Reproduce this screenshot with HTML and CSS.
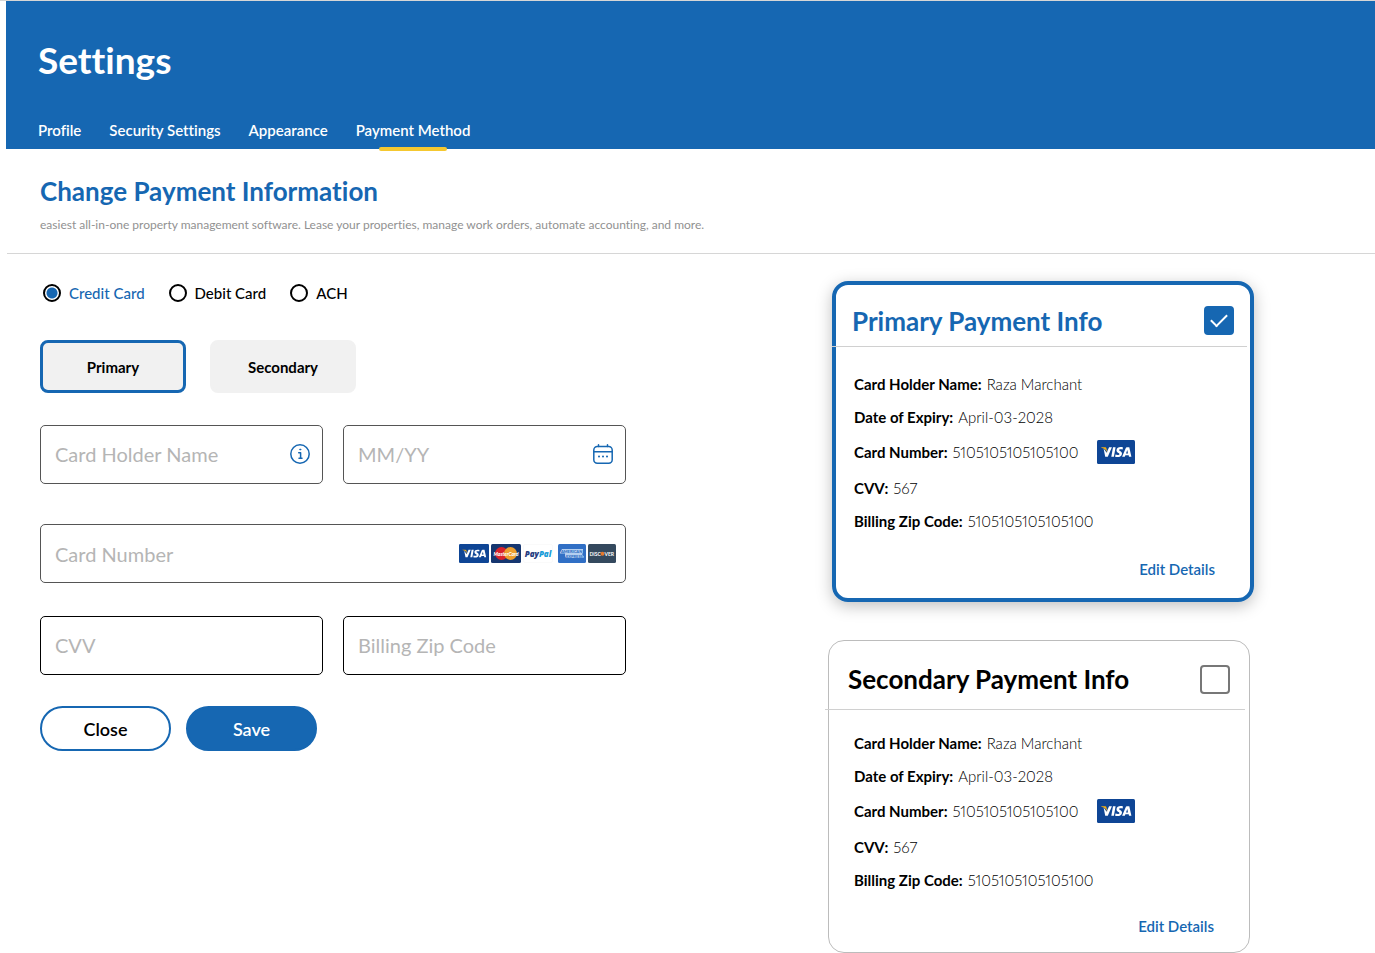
FILE: index.html
```html
<!DOCTYPE html>
<html lang="en">
<head>
<meta charset="utf-8">
<meta name="viewport" content="width=device-width, initial-scale=1">
<title>Settings - Payment Method</title>
<link rel="stylesheet" href="styles.css">
</head>
<body>
<svg class="defs" aria-hidden="true">
  <symbol id="visa" viewBox="0 0 38 24">
    <rect width="38" height="24" rx="1.5" fill="#0e4595"/>
    <path fill="#fff" d="M6.600 8.500 9.600 12.800 12.100 7.200H14.900L10.800 16.800H8.200ZM16 7.200h2.600l-1.700 9.600h-2.600ZM26 7.500l-.4 2.100c-1.500-.7-3.500-.6-3.600.3-.1.9 3.200 1.300 3 3.900-.3 3.200-3.900 3.900-6.900 2.900l.4-2.200c1.800.8 4 .6 4-.5 0-1.100-3.100-1.300-3-3.800.1-3 3.600-3.600 6.500-2.700ZM29.800 7.200h2.500l2.100 9.600H32l-.3-1.500h-3.300l-.6 1.500h-2.700l3.700-8.800c.2-.5.500-.8 1-.8Zm.5 2.700-1.300 3.500h2Z"/>
    <path fill="#f2ae14" d="M4.300 7.200H8c.8 0 1.200.3 1.400 1l1 4.600C9.200 10 7.800 8.300 4.300 7.700Z"/>
  </symbol>
</svg>

<header class="banner">
  <h1 class="banner-title">Settings</h1>
  <nav class="tabs" aria-label="Settings sections">
    <a class="tab" href="#profile">Profile</a>
    <a class="tab" href="#security">Security Settings</a>
    <a class="tab" href="#appearance">Appearance</a>
    <a class="tab tab-active" href="#payment" aria-current="page">Payment Method</a>
  </nav>
</header>

<section class="intro">
  <h2 class="intro-title">Change Payment Information</h2>
  <p class="intro-text">easiest all-in-one property management software. Lease your properties, manage work orders, automate accounting, and more.</p>
</section>

<main class="content">
  <form class="form">
    <div class="methods">
      <label class="method"><input type="radio" name="method" checked><span>Credit Card</span></label>
      <label class="method"><input type="radio" name="method"><span>Debit Card</span></label>
      <label class="method"><input type="radio" name="method"><span>ACH</span></label>
    </div>

    <div class="slots">
      <button type="button" class="slot slot-active">Primary</button>
      <button type="button" class="slot">Secondary</button>
    </div>

    <div class="fields">
      <div class="field">
        <input type="text" aria-label="Card Holder Name" placeholder="Card Holder Name">
        <svg class="field-icon" viewBox="0 0 20 20" fill="none" stroke="#1667b2" stroke-width="1.5" stroke-linecap="round" stroke-linejoin="round" aria-hidden="true"><circle cx="10" cy="10" r="9.2"/><path d="M8.700 8.700h1.900v5.500M9 14.300h3"/><circle cx="10.200" cy="5.500" r=".6" fill="#1667b2" stroke-width=".8"/></svg>
      </div>
      <div class="field">
        <input type="text" aria-label="Expiry date" placeholder="MM/YY">
        <svg class="field-icon" viewBox="0 0 20 20" fill="none" stroke="#1667b2" stroke-width="1.5" stroke-linecap="round" aria-hidden="true"><rect x=".8" y="2.500" width="18.400" height="16.700" rx="3.500"/><path d="M5.500.8v1.700M14.500.8v1.700M1 7.700h18"/><path stroke-width="2" d="M6 12.600h.01M10 12.600h.01M14 12.600h.01"/></svg>
      </div>
    </div>

    <div class="field field-number">
      <input type="text" aria-label="Card Number" placeholder="Card Number">
      <div class="brands" aria-hidden="true">
        <svg class="brand" viewBox="0 0 38 24" preserveAspectRatio="none"><use href="#visa"/></svg>
        <svg class="brand" viewBox="0 0 30 19"><rect width="30" height="19" rx="1.500" fill="#16366f"/><circle cx="10.500" cy="9.500" r="6.500" fill="#d9222a"/><circle cx="19.500" cy="9.500" r="6.500" fill="#ee9f2d"/><text class="mc-text" x="15" y="11.500" text-anchor="middle">MasterCard</text></svg>
        <svg class="brand" viewBox="0 0 30 19"><rect x=".5" y=".5" width="29" height="18" rx="1.500" fill="#fff" stroke="#fafafa"/><text class="paypal-text" x="15" y="12.500" text-anchor="middle"><tspan fill="#253b80">Pay</tspan><tspan fill="#179bd7">Pal</tspan></text></svg>
        <svg class="brand brand-narrow brand-amex" viewBox="0 0 28 19"><rect width="28" height="19" rx="1.500" fill="#306fc5"/><path d="M2 8.500 4 5h21v4l-1 1 2 3-1 1H8l-1-2V9.500H2Z" fill="#b4cff0"/><text class="amex-text" x="3" y="9">AMERICAN</text><text class="amex-text" x="8" y="13.500">EXPRESS</text></svg>
        <svg class="brand brand-narrow" viewBox="0 0 28 19"><rect width="28" height="19" rx="1.500" fill="#34495e"/><text class="discover-text" x="1.500" y="11.500">DISC</text><circle cx="14.500" cy="9.700" r="2" fill="#e7792b"/><text class="discover-text" x="16.500" y="11.500">VER</text></svg>
      </div>
    </div>

    <div class="fields fields-last">
      <div class="field field-dark"><input type="text" aria-label="CVV" placeholder="CVV"></div>
      <div class="field field-dark"><input type="text" aria-label="Billing Zip Code" placeholder="Billing Zip Code"></div>
    </div>

    <div class="actions">
      <button type="button" class="pill">Close</button>
      <button type="submit" class="pill pill-fill">Save</button>
    </div>
  </form>

  <aside class="cards">
    <article class="card card-primary">
      <label class="card-head"><span class="card-title">Primary Payment Info</span><input class="card-check" type="checkbox" checked></label>
      <hr class="card-rule">
      <dl class="details">
        <div class="row"><dt>Card Holder Name:</dt><dd>Raza Marchant</dd></div>
        <div class="row"><dt>Date of Expiry:</dt><dd>April-03-2028</dd></div>
        <div class="row row-number"><dt>Card Number:</dt><dd>5105105105105100</dd><dd class="row-brand"><svg viewBox="0 0 38 24" role="img" aria-label="Visa"><use href="#visa"/></svg></dd></div>
        <div class="row"><dt>CVV:</dt><dd>567</dd></div>
        <div class="row"><dt>Billing Zip Code:</dt><dd>5105105105105100</dd></div>
      </dl>
      <a class="edit" href="#edit-primary">Edit Details</a>
    </article>

    <article class="card card-secondary">
      <label class="card-head"><span class="card-title">Secondary Payment Info</span><input class="card-check" type="checkbox"></label>
      <hr class="card-rule">
      <dl class="details">
        <div class="row"><dt>Card Holder Name:</dt><dd>Raza Marchant</dd></div>
        <div class="row"><dt>Date of Expiry:</dt><dd>April-03-2028</dd></div>
        <div class="row row-number"><dt>Card Number:</dt><dd>5105105105105100</dd><dd class="row-brand"><svg viewBox="0 0 38 24" role="img" aria-label="Visa"><use href="#visa"/></svg></dd></div>
        <div class="row"><dt>CVV:</dt><dd>567</dd></div>
        <div class="row"><dt>Billing Zip Code:</dt><dd>5105105105105100</dd></div>
      </dl>
      <a class="edit" href="#edit-secondary">Edit Details</a>
    </article>
  </aside>
</main>
</body>
</html>
```
FILE: styles.css
```css
* {
  box-sizing: border-box;
}

body {
  margin: 0;
  padding-left: 6px;
  border-top: 1px solid #d6d6d6;
  background: #fff;
  color: #000;
  font-family: Lato, "Open Sans", sans-serif;
  font-size: 15px;
  font-variant-ligatures: none;
  font-variant-numeric: proportional-nums;
  line-height: 20px;
}

h1, h2, p, dl, dd, hr {
  margin: 0;
}

a {
  text-decoration: none;
}

button, input {
  margin: 0;
  font: inherit;
}

.defs {
  position: absolute;
  width: 0;
  height: 0;
}

/* Banner */
.banner {
  height: 148px;
  padding: 35px 32px 0;
  background: #1667b2;
  color: #fff;
}

.banner-title {
  font-size: 37px;
  font-weight: 700;
  line-height: 48px;
}

.tabs {
  display: flex;
  gap: 28px;
  margin-top: 36px;
}

.tab {
  position: relative;
  height: 31px;
  color: #fff;
  font-weight: 600;
}

.tab-active::after {
  content: "";
  position: absolute;
  left: 20%;
  right: 20%;
  bottom: 0;
  height: 4px;
  border-radius: 2px;
  background: #f5c830;
}

/* Intro */
.intro {
  margin-left: 1px;
  padding: 26px 33px 19px;
  border-bottom: 1px solid #d6d6d6;
}

.intro-title {
  color: #1667b2;
  font-size: 26px;
  font-weight: 700;
  line-height: 32px;
}

.intro-text {
  margin-top: 9px;
  color: #919191;
  font-size: 12px;
  line-height: 18px;
}

/* Content */
.content {
  display: grid;
  grid-template-columns: minmax(0, 586fr) minmax(0, 202fr) minmax(0, 422fr);
  align-items: start;
  padding: 27px 125px 0 34px;
}

.methods {
  display: flex;
  gap: 24px;
  padding: 2px 3px 0;
}

.method {
  display: flex;
  align-items: center;
  gap: 8px;
  font-weight: 500;
}

.method input {
  appearance: none;
  width: 18px;
  height: 18px;
  border: 2px solid #000;
  border-radius: 50%;
  background: #fff;
}

.method input:checked {
  background: radial-gradient(circle, #1667b2 5px, #fff 6px);
}

.method input:checked + span {
  color: #1667b2;
}

.slots {
  display: flex;
  gap: 24px;
  margin-top: 37px;
}

.slot {
  width: 146px;
  height: 53px;
  border: 3px solid #f1f1f1;
  border-radius: 8px;
  background: #f1f1f1;
  color: #000;
  font-weight: 700;
}

.slot-active {
  border-color: #1667b2;
}

.fields {
  display: grid;
  grid-template-columns: minmax(0, 1fr) minmax(0, 1fr);
  gap: 20px;
  margin-top: 32px;
}

.fields-last {
  margin-top: 33px;
}

.field {
  display: flex;
  align-items: center;
  height: 59px;
  padding: 0 12px 2px 14px;
  border: 1px solid #555;
  border-radius: 5px;
}

.field-dark {
  border-color: #000;
}

.field-number {
  margin-top: 40px;
  padding-right: 9px;
  padding-bottom: 0;
}

.field input {
  flex: 1;
  min-width: 0;
  padding: 0;
  border: 0;
  outline: 0;
  background: none;
  font-size: 20px;
  line-height: 28px;
}

.field input::placeholder {
  color: #b5b5b5;
  opacity: 1;
}

.field-icon {
  flex: none;
  width: 20px;
  height: 20px;
}

.brands {
  display: flex;
  gap: 2px;
}

.brand {
  width: 30px;
  height: 19px;
}

.brand-narrow {
  width: 28px;
}

.brand-amex {
  margin-left: 3px;
}

.mc-text {
  fill: #fff;
  font-size: 5px;
  font-style: italic;
  font-weight: 900;
}

.paypal-text {
  font-family: "Open Sans", sans-serif;
  font-size: 8px;
  font-style: italic;
  font-weight: 800;
}

.amex-text {
  fill: #306fc5;
  font-size: 4px;
  font-weight: 900;
}

.discover-text {
  fill: #fff;
  font-size: 5px;
  font-weight: 700;
}

.actions {
  display: flex;
  gap: 15px;
  margin-top: 31px;
}

.pill {
  width: 131px;
  height: 45px;
  border: 2px solid #1667b2;
  border-radius: 23px;
  background: #fff;
  color: #000;
  font-size: 18px;
  font-weight: 600;
}

.pill-fill {
  background: #1667b2;
  color: #fff;
}

/* Saved cards */
.cards {
  display: grid;
  grid-column: 3;
  gap: 38px;
}

.card {
  display: flex;
  flex-direction: column;
}

.card-primary {
  margin: 0 -4px 0 4px;
  padding-bottom: 17px;
  border: 4px solid #1667b2;
  border-radius: 16px;
  box-shadow: 0 4px 16px rgba(0, 0, 0, 0.25);
}

.card-secondary {
  padding-bottom: 14px;
  border: 1px solid #bcbcbc;
  border-radius: 16px;
}

.card-head {
  display: flex;
  align-items: center;
  justify-content: space-between;
  height: 61px;
  padding: 10px 16px 0;
}

.card-primary .card-title {
  color: #1667b2;
}

.card-secondary .card-head {
  height: 68px;
  padding: 8px 19px 0;
}

.card-title {
  font-size: 26px;
  font-weight: 700;
  line-height: 32px;
}

.card-check {
  appearance: none;
  flex: none;
  width: 30px;
  height: 29px;
  border: 2px solid #777;
  border-radius: 4px;
  background: #fff;
}

.card-check:checked {
  display: grid;
  place-items: center;
  border-color: #1667b2;
  background: #1667b2;
}

.card-check:checked::before {
  content: "";
  width: 14px;
  height: 7px;
  margin-bottom: 4px;
  border: solid #fff;
  border-width: 0 0 2px 2px;
  transform: rotate(-45deg);
}

.card-rule {
  height: 1px;
  border: 0;
  background: #d0d0d0;
}

.card-primary .card-rule {
  margin: 0 3px 0 -4px;
}

.card-secondary .card-rule {
  margin: 0 4px 0 -4px;
}

.details {
  padding: 20px 18px 0;
}

.card-secondary .details {
  padding: 16px 25px 0;
}

.row {
  display: flex;
  align-items: center;
  gap: 5px;
  height: 33px;
}

.row-number {
  height: 38px;
}

.row dt {
  font-weight: 700;
}

.row dd {
  font-weight: 300;
}

.row-brand {
  display: flex;
  width: 38px;
  height: 24px;
  margin-left: 14px;
}

.edit {
  align-self: flex-end;
  margin-top: 20px;
  margin-right: 35px;
  color: #1667b2;
  font-weight: 600;
  line-height: 24px;
}

.card-secondary .edit {
  margin-top: 18px;
}
```
